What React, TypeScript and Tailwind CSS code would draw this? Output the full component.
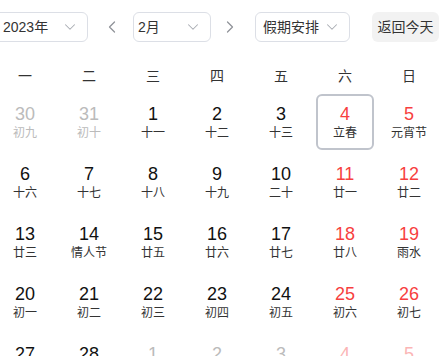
import React from "react";
import { ChevronDown, ChevronLeft, ChevronRight } from "lucide-react";

type Day = {
  d: number;
  lunar: string;
  other?: boolean;
  weekend?: boolean;
  selected?: boolean;
};

const weekNames = ["一", "二", "三", "四", "五", "六", "日"];

const lunarFeb = [
  "十一", "十二", "十三", "立春", "元宵节", "十六", "十七", "十八", "十九", "二十",
  "廿一", "廿二", "廿三", "情人节", "廿五", "廿六", "廿七", "廿八", "雨水", "初一",
  "初二", "初三", "初四", "初五", "初六", "初七", "初八", "初九",
];

const days: Day[] = [
  { d: 30, lunar: "初九", other: true },
  { d: 31, lunar: "初十", other: true },
  ...lunarFeb.map((lunar, i) => ({
    d: i + 1,
    lunar,
    weekend: (i + 2) % 7 >= 5,
    selected: i + 1 === 4,
  })),
  { d: 1, lunar: "初十", other: true },
  { d: 2, lunar: "十一", other: true },
  { d: 3, lunar: "十二", other: true },
  { d: 4, lunar: "十三", other: true, weekend: true },
  { d: 5, lunar: "十四", other: true, weekend: true },
];

const Select = ({ label, className }: { label: string; className: string }) => (
  <div
    className={`h-[30px] flex items-center justify-between border border-[#dcdfe6] rounded-[6px] bg-white pr-[8px] text-[14px] text-[#333] ${className}`}
  >
    <span>{label}</span>
    <ChevronDown size={18} strokeWidth={1.4} className="text-[#a8abb2]" />
  </div>
);

function dayColor(day: Day) {
  if (day.other) return day.weekend ? "text-[#fbb5b5]" : "text-[#bbbbbb]";
  return day.weekend ? "text-[#f73f3f]" : "text-[#111]";
}

export default function App() {
  return (
    <div
      className="h-[356px] bg-white overflow-hidden"
      style={{ fontFamily: '"Liberation Sans", "Noto Sans CJK SC", sans-serif' }}
    >
      <div className="-ml-[7px] w-[448px]">
        {/* toolbar */}
        <div className="flex items-center pt-[12px] pl-[1px]">
          <Select label="2023年" className="w-[94px] pl-[8px]" />
          <ChevronLeft size={20} strokeWidth={1.5} className="ml-[14px] text-[#909399]" />
          <Select label="2月" className="ml-[11px] w-[78px] pl-[4px]" />
          <ChevronRight size={20} strokeWidth={1.5} className="ml-[9px] text-[#909399]" />
          <Select label="假期安排" className="ml-[15px] w-[95px] pl-[7px]" />
          <button className="ml-[22px] h-[30px] w-[67px] rounded-[6px] bg-[#f2f2f2] text-[14px] text-[#333]">
            返回今天
          </button>
        </div>

        {/* week header */}
        <div className="grid grid-cols-7 mt-[18px] h-[32px] items-center text-center text-[14px] text-[#333]">
          {weekNames.map((w) => (
            <div key={w}>{w}</div>
          ))}
        </div>

        {/* days */}
        <div className="grid grid-cols-7">
          {days.map((day, i) => (
            <div key={i} className="h-[60px] px-[3px] py-[2px]">
              <div
                className={`h-full flex flex-col items-center justify-center rounded-[6px] border-2 ${
                  day.selected ? "border-[#c0c4cc]" : "border-transparent"
                }`}
              >
                <div className={`text-[18px] leading-[20px] ${dayColor(day)}`}>{day.d}</div>
                <div
                  className={`text-[12px] leading-[16px] mt-[1px] ${
                    day.other ? (day.weekend ? "text-[#fbb5b5]" : "text-[#bbbbbb]") : "text-[#333]"
                  }`}
                >
                  {day.lunar}
                </div>
              </div>
            </div>
          ))}
        </div>
      </div>
    </div>
  );
}
